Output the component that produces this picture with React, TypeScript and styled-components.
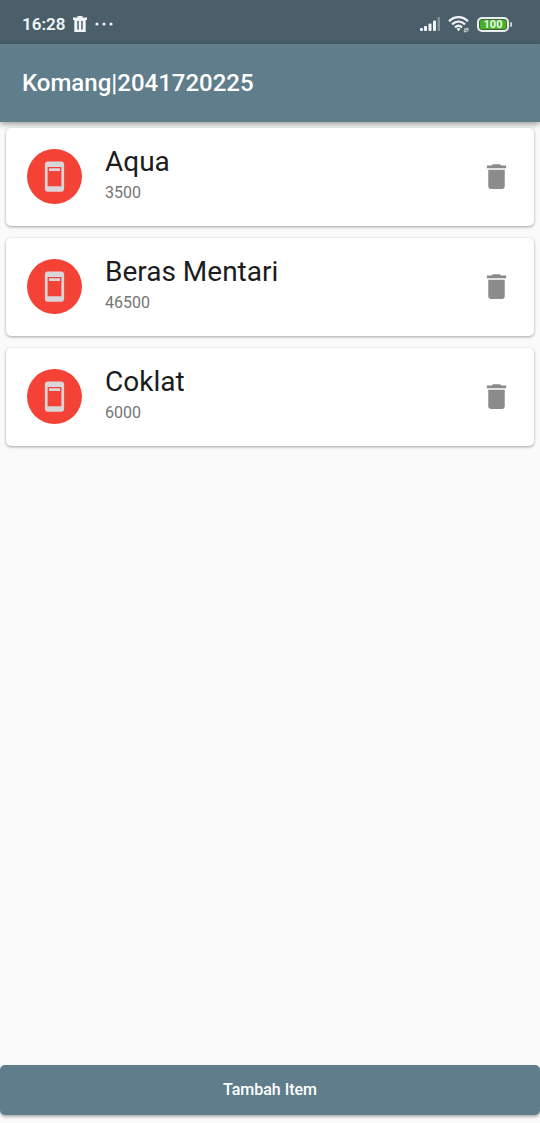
import React from "react";
import styled, { createGlobalStyle } from "styled-components";

const GlobalStyle = createGlobalStyle`
  * { box-sizing: border-box; }
  body {
    margin: 0;
    background: #fafafa;
    font-family: Roboto, "Liberation Sans", sans-serif;
  }
`;

const Screen = styled.div`
  min-height: 100vh;
  display: flex;
  flex-direction: column;
`;

const StatusBar = styled.div`
  height: 44px;
  padding: 4px 28px 0 22px;
  display: flex;
  align-items: center;
  justify-content: space-between;
  background: #4a5f6a;
  color: #f1f5f7;
`;

const StatusGroup = styled.div<{ $gap: number }>`
  display: flex;
  align-items: center;
  gap: ${(p) => p.$gap}px;
`;

const Clock = styled.span`
  font-size: 17px;
  line-height: 20px;
  font-weight: 600;
`;

const AppBar = styled.header`
  height: 78px;
  padding: 0 22px;
  display: flex;
  align-items: center;
  background: #607d8b;
  box-shadow: 0 2px 6px rgba(0, 0, 0, 0.4);
`;

const Title = styled.h1`
  margin: 0;
  font-size: 24px;
  line-height: 28px;
  font-weight: 500;
  color: #fff;
`;

const ItemList = styled.ul`
  flex: 1;
  margin: 0;
  padding: 6px;
  list-style: none;
  display: flex;
  flex-direction: column;
  gap: 12px;
`;

const Card = styled.li`
  height: 98px;
  padding: 0 16px 1px 21px;
  display: flex;
  align-items: center;
  gap: 23px;
  background: #fff;
  border-radius: 5px;
  box-shadow: 0 1px 3px rgba(0, 0, 0, 0.36);
`;

const Avatar = styled.div`
  width: 55px;
  height: 55px;
  flex: none;
  display: flex;
  align-items: center;
  justify-content: center;
  border-radius: 50%;
  background: #f44336;
`;

const ItemText = styled.div`
  flex: 1;
  min-width: 0;
  padding-bottom: 1px;
`;

const ItemName = styled.div`
  font-size: 28px;
  line-height: 34px;
  color: #1c1c1c;
`;

const ItemPrice = styled.div`
  font-size: 16px;
  line-height: 28px;
  color: #757575;
`;

const IconButton = styled.button`
  width: 43px;
  height: 43px;
  padding: 0;
  flex: none;
  display: flex;
  align-items: center;
  justify-content: center;
  border: 0;
  background: none;
  color: #8b8b8b;
  cursor: pointer;
`;

const Footer = styled.footer`
  padding-bottom: 8px;
`;

const AddButton = styled.button`
  display: block;
  width: 100%;
  height: 50px;
  padding: 0;
  border: 0;
  border-radius: 5px;
  background: #607d8b;
  box-shadow: 0 2px 3px rgba(0, 0, 0, 0.3);
  color: #fff;
  font: 500 16px/20px Roboto, "Liberation Sans", sans-serif;
  cursor: pointer;
`;

const StatusTrash = () => (
  <svg width="14" height="16" viewBox="0 0 14 16" aria-hidden="true">
    <path
      fill="currentColor"
      fillRule="evenodd"
      d="M4.500 0h5v1.500H14V4h-1.300v12H1.300V4H0V1.500h4.500zM4.300 5v8.500h1.500V5zM8.200 5v8.500h1.500V5z"
    />
  </svg>
);

const MoreDots = () => (
  <svg width="18" height="4" viewBox="0 0 18 4" fill="currentColor" aria-hidden="true">
    <circle cx="2" cy="2" r="1.600" />
    <circle cx="9" cy="2" r="1.600" />
    <circle cx="16" cy="2" r="1.600" />
  </svg>
);

const Signal = () => (
  <svg width="21" height="16" viewBox="0 0 21 16" fill="currentColor" aria-hidden="true">
    <rect x="0" y="12" width="3" height="3" rx="1" />
    <rect x="4" y="10" width="3" height="5" rx="1" />
    <rect x="8.500" y="7.500" width="3" height="7.500" rx="1" />
    <rect x="13" y="4.500" width="3" height="10.500" rx="1" />
    <rect x="17.500" y="1" width="2.500" height="14" rx="1" opacity="0.35" />
  </svg>
);

const Wifi = () => (
  <svg width="22" height="18" viewBox="0 0 22 18" aria-hidden="true">
    <g fill="none" stroke="currentColor" strokeWidth="2.200">
      <path d="M1 6.200C6.500 0.700 14.500 0.700 20 6.200" />
      <path d="M4 9.400c4-3.900 9-3.900 13 0" />
      <path d="M7 12.400c2.200-2.100 4.800-2.100 7 0" />
    </g>
    <path fill="currentColor" d="M8.500 13.800q2-1.400 4 0l-2 2.400z" />
    <path
      fill="none"
      stroke="currentColor"
      strokeWidth="1.200"
      opacity="0.8"
      d="M16 14.200h4l-1.200-1.400M20.500 16h-4l1.200 1.400"
    />
  </svg>
);

const Battery = styled.div`
  width: 32px;
  height: 15px;
  padding-top: 1px;
  display: flex;
  align-items: center;
  justify-content: center;
  border: 2px solid #e8eef0;
  border-radius: 5px;
  background: #43b324;
  box-shadow: inset 0 0 0 1px #47663f;
  font-size: 11px;
  line-height: 12px;
  font-weight: 700;
`;

const BatteryTip = styled.span`
  width: 2px;
  height: 5px;
  border-radius: 1px;
  background: #c3ced3;
`;

const PhoneIcon = () => (
  <svg width="33" height="33" viewBox="0 0 24 24" fill="#d9d5d8" aria-hidden="true">
    <path d="M17 1H7c-1.100 0-2 .9-2 2v18c0 1.100.9 2 2 2h10c1.100 0 2-.9 2-2V3c0-1.100-.9-2-2-2zm0 18H7V5h10v14z" />
    <path d="M8 6h8v2H8z" />
  </svg>
);

const DeleteIcon = () => (
  <svg width="33" height="33" viewBox="0 0 24 24" fill="currentColor" aria-hidden="true">
    <path d="M6 19c0 1.100.9 2 2 2h8c1.100 0 2-.9 2-2V7H6v12zM19 4h-3.500l-1-1h-5l-1 1H5v2h14V4z" />
  </svg>
);

const items = [
  { name: "Aqua", price: 3500 },
  { name: "Beras Mentari", price: 46500 },
  { name: "Coklat", price: 6000 },
];

export default function App() {
  return (
    <>
      <GlobalStyle />
      <Screen>
        <StatusBar>
          <StatusGroup $gap={8}>
            <Clock>16:28</Clock>
            <StatusTrash />
            <MoreDots />
          </StatusGroup>
          <StatusGroup $gap={7}>
            <Signal />
            <Wifi />
            <StatusGroup $gap={1}>
              <Battery>100</Battery>
              <BatteryTip />
            </StatusGroup>
          </StatusGroup>
        </StatusBar>
        <AppBar>
          <Title>Komang|2041720225</Title>
        </AppBar>
        <ItemList>
          {items.map((item) => (
            <Card key={item.name}>
              <Avatar>
                <PhoneIcon />
              </Avatar>
              <ItemText>
                <ItemName>{item.name}</ItemName>
                <ItemPrice>{item.price}</ItemPrice>
              </ItemText>
              <IconButton type="button" aria-label={`Hapus ${item.name}`}>
                <DeleteIcon />
              </IconButton>
            </Card>
          ))}
        </ItemList>
        <Footer>
          <AddButton type="button">Tambah Item</AddButton>
        </Footer>
      </Screen>
    </>
  );
}
